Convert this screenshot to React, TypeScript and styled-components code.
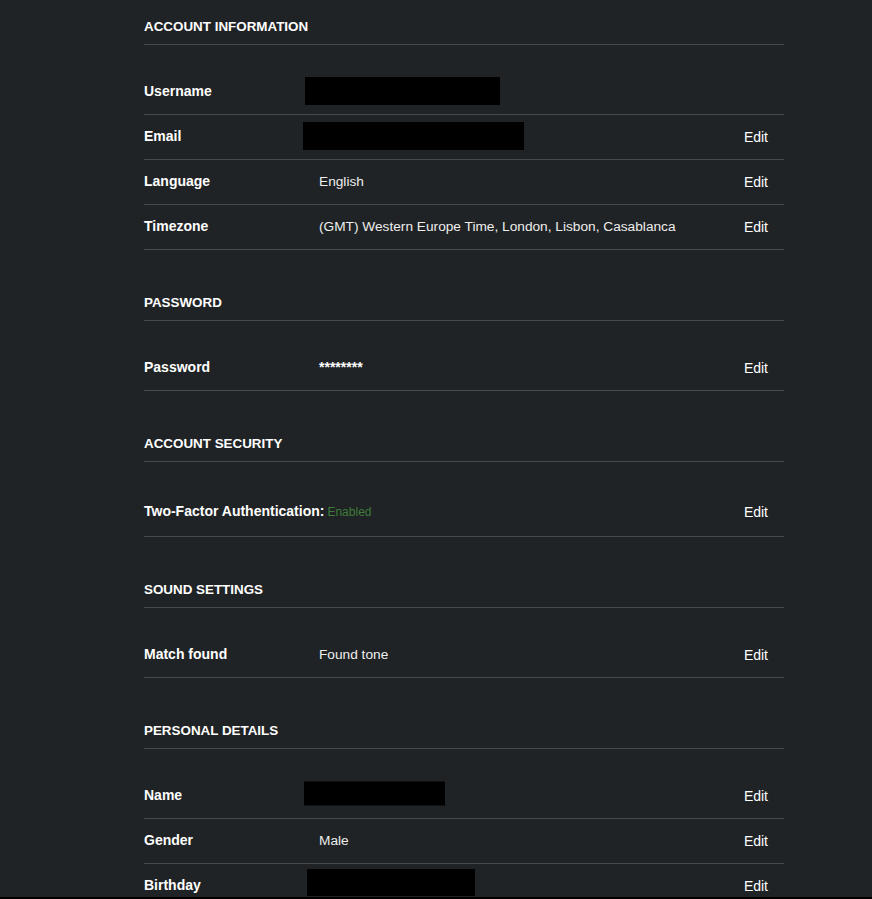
import React from "react";
import styled, { createGlobalStyle } from "styled-components";

const GlobalStyle = createGlobalStyle`
  html, body { margin: 0; padding: 0; background: #000; }
  body { font-family: "Liberation Sans", Arial, sans-serif; }
`;

const Page = styled.div`
  height: 897px;
  overflow: hidden;
  background: #202325;
  padding-left: 144px;
`;

const Column = styled.div`
  width: 640px;
  display: flex;
  flex-direction: column;
`;

const Section = styled.section`
  display: flex;
  flex-direction: column;
  & + & { margin-top: 26px; }
`;

const SectionTitle = styled.h2`
  margin: 0;
  padding: 19px 0 9px;
  height: 16px;
  line-height: 16px;
  font-size: 13.4px;
  font-weight: 700;
  color: #fff;
  border-bottom: 1px solid #48494b;
`;

const Rows = styled.div`
  display: flex;
  flex-direction: column;
  padding-top: 25px;
`;

const Row = styled.div<{ $h?: number }>`
  display: grid;
  grid-template-columns: 175px 1fr auto;
  align-items: center;
  box-sizing: content-box;
  height: ${(p) => (p.$h ?? 44) - 2}px;
  padding-bottom: 2px;
  border-bottom: 1px solid #48494b;
  font-size: 14px;
`;

const Label = styled.div<{ $wide?: boolean }>`
  font-weight: 700;
  color: #fff;
  white-space: nowrap;
  ${(p) => (p.$wide ? "grid-column: 1 / 3;" : "")}
`;

const Value = styled.div`
  color: #eeeeee;
  font-size: 13.7px;
  white-space: nowrap;
  display: flex;
  align-items: center;
`;

const Stars = styled.span`
  font-weight: 700;
  font-size: 14px;
  color: #fff;
`;

const Status = styled.span`
  font-size: 12px;
  font-weight: 400;
  color: #3e7b3a;
  margin-left: 3px;
`;

const Redacted = styled.span<{ $w: number; $h: number; $shift: number; $dy?: number }>`
  display: block;
  width: ${(p) => p.$w}px;
  height: ${(p) => p.$h}px;
  margin-left: ${(p) => p.$shift}px;
  transform: translateY(${(p) => p.$dy ?? 0}px);
  background: #000;
`;

const Edit = styled.a`
  color: #fff;
  font-size: 14px;
  padding-top: 2px;
  padding-right: 16px;
  cursor: pointer;
`;

type RowDef = {
  label: string;
  value?: React.ReactNode;
  edit?: boolean;
  wide?: boolean;
  h?: number;
};

type SectionDef = { title: string; rows: RowDef[] };

const sections: SectionDef[] = [
  {
    title: "ACCOUNT INFORMATION",
    rows: [
      { label: "Username", value: <Redacted $w={195} $h={28} $shift={-14} /> },
      { label: "Email", value: <Redacted $w={221} $h={28} $shift={-16} />, edit: true },
      { label: "Language", value: "English", edit: true },
      { label: "Timezone", value: "(GMT) Western Europe Time, London, Lisbon, Casablanca", edit: true },
    ],
  },
  {
    title: "PASSWORD",
    rows: [{ label: "Password", value: <Stars>********</Stars>, edit: true }],
  },
  {
    title: "ACCOUNT SECURITY",
    rows: [
      {
        label: "Two-Factor Authentication:",
        wide: true,
        edit: true,
        h: 49,
      },
    ],
  },
  {
    title: "SOUND SETTINGS",
    rows: [{ label: "Match found", value: "Found tone", edit: true }],
  },
  {
    title: "PERSONAL DETAILS",
    rows: [
      { label: "Name", value: <Redacted $w={141} $h={24} $shift={-15} $dy={-1.5} />, edit: true },
      { label: "Gender", value: "Male", edit: true },
      { label: "Birthday", value: <Redacted $w={168} $h={27} $shift={-12} $dy={-3} />, edit: true },
    ],
  },
];

export default function App() {
  return (
    <>
      <GlobalStyle />
      <Page>
        <Column>
          {sections.map((s) => (
            <Section key={s.title}>
              <SectionTitle>{s.title}</SectionTitle>
              <Rows>
                {s.rows.map((r) => (
                  <Row key={r.label} $h={r.h}>
                    {r.wide ? (
                      <Label $wide>
                        {r.label}
                        <Status>Enabled</Status>
                      </Label>
                    ) : (
                      <>
                        <Label>{r.label}</Label>
                        <Value>{r.value}</Value>
                      </>
                    )}
                    {r.edit ? <Edit>Edit</Edit> : <span />}
                  </Row>
                ))}
              </Rows>
            </Section>
          ))}
        </Column>
      </Page>
    </>
  );
}
